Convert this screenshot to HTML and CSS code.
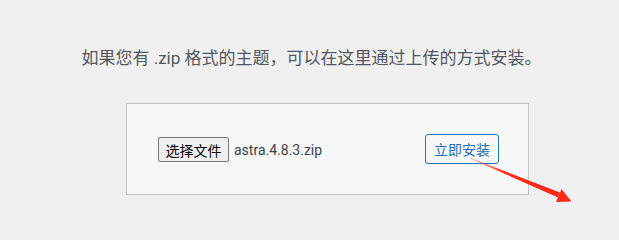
FILE: index.html
```html
<!DOCTYPE html>
<html lang="zh-CN">
<head>
<meta charset="utf-8">
<title>上传主题</title>
<link rel="stylesheet" href="styles.css">
</head>
<body>
<div class="upload-theme">
  <p class="install-help">如果您有 .zip 格式的主题，可以在这里通过上传的方式安装。</p>
  <form class="upload-form">
    <div class="file-field">
      <span class="file-btn">选择文件</span>
      <span class="file-name">astra.4.8.3.zip</span>
    </div>
    <span class="install-btn">立即安装</span>
  </form>
</div>
<svg class="arrow" width="619" height="223" viewBox="0 0 619 223" aria-hidden="true">
  <defs>
    <linearGradient id="g" x1="470" y1="158" x2="571" y2="201" gradientUnits="userSpaceOnUse">
      <stop offset="0" stop-color="#ff3b30" stop-opacity="0.25"/>
      <stop offset="0.35" stop-color="#ff2a1a"/>
      <stop offset="1" stop-color="#ff2a1a"/>
    </linearGradient>
  </defs>
  <polygon points="470,157.6 560,192.6 558,197.4 469.8,158.4" fill="url(#g)"/>
  <polygon points="561.5,189 571.5,201.5 556,202" fill="#ff2a1a"/>
</svg>
</body>
</html>
```

FILE: styles.css
```css
html, body {
  margin: 0;
  padding: 0;
}
body {
  background: #f0f0f1;
  width: 619px;
  height: 223px;
  overflow: hidden;
  position: relative;
  font-family: "Segoe UI", Roboto, "Noto Sans", "Noto Sans CJK SC", sans-serif;
}
.upload-theme {
  display: flex;
  flex-direction: column;
}
.install-help {
  margin: 0;
  padding: 46px 0 0 4px;
  text-align: center;
  font-size: 17px;
  line-height: 24px;
  color: #50575e;
}
.upload-form {
  margin: 33px 0 0 126px;
  height: 90px;
  width: 341px;
  border: 1px solid #c3c4c7;
  background: #f6f7f7;
  display: flex;
  align-items: center;
  justify-content: space-between;
  padding: 0 29px 0 31px;
  box-sizing: content-box;
}
.file-field {
  display: flex;
  align-items: center;
  gap: 5px;
  margin-top: 1px;
}
.file-btn {
  display: inline-flex;
  align-items: center;
  justify-content: center;
  box-sizing: border-box;
  width: 71px;
  height: 25px;
  border: 1px solid #767676;
  border-radius: 2px;
  background: #efefef;
  color: #000;
  font-size: 14px;
}
.file-name {
  font-size: 14px;
  color: #3c434a;
}
.install-btn {
  display: inline-flex;
  align-items: center;
  justify-content: center;
  box-sizing: border-box;
  width: 74px;
  height: 30px;
  border: 1px solid #2271b1;
  border-radius: 3px;
  background: #f6f7f7;
  color: #2271b1;
  font-size: 14px;
}
.arrow {
  position: absolute;
  left: 0;
  top: 0;
  pointer-events: none;
}
```
